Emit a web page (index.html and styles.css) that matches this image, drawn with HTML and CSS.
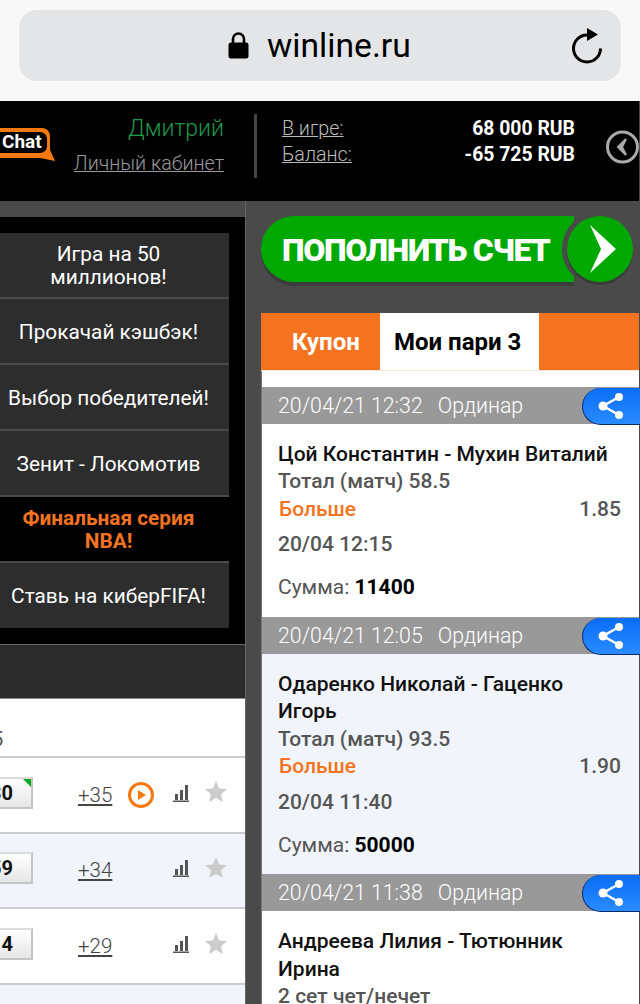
FILE: index.html

```html
<!DOCTYPE html>
<html lang="ru">
<head>
  <meta charset="UTF-8">
  <title>winline.ru</title>
  <meta name="viewport" content="width=device-width, initial-scale=1.0">
  <link rel="stylesheet" href="styles.css">
</head>
<body>
  <div class="addr-wrap">
    <div class="addr">
      <svg class="lock" width="21" height="28" viewBox="0 0 21 28"><path d="M5 13V8a5.500 5.500 0 0 1 11 0v5" fill="none" stroke="#000" stroke-width="2.600"/><rect x="0.500" y="11.500" width="20" height="16" rx="2.500" fill="#000"/></svg>
      <span class="url">winline.ru</span>
      <svg class="reload" width="32" height="36" viewBox="0 0 32 36"><path d="M16 7A13.500 13.500 0 1 0 29.500 20.500" fill="none" stroke="#000" stroke-width="3"/><path d="M16 0l11 6.500-11 6.500z" fill="#000"/></svg>
    </div>
  </div>

  <div class="page">
    <header class="top">
      <svg class="chat" width="56" height="44" viewBox="0 0 56 44">
        <path d="M0 0h42a8 8 0 0 1 8 8v14l5 11-15-3H0z" fill="#f47a10"/>
        <rect x="-6" y="4" width="53" height="21" rx="7" fill="#000"/>
        <text x="2" y="20" class="chat-txt">Chat</text>
      </svg>
      <div class="user">
        <div class="user-name">Дмитрий</div>
        <a class="user-link">Личный кабинет</a>
      </div>
      <div class="sep"></div>
      <div class="money">
        <div class="money-row"><a>В игре:</a><b>68 000 RUB</b></div>
        <div class="money-row"><a>Баланс:</a><b>-65 725 RUB</b></div>
      </div>
      <svg class="back" width="33" height="36" viewBox="0 0 33 36"><circle cx="16.500" cy="18" r="15" fill="none" stroke="#aaa" stroke-width="3"/><path d="M20 10l-8 8 8 8-4-8z" fill="#aaa" stroke="#aaa" stroke-width="2"/></svg>
    </header>

    <div class="main">
      <div class="left">
        <div class="promo">
          <div class="promo-item">Игра на 50<br>миллионов!</div>
          <div class="promo-item">Прокачай кэшбэк!</div>
          <div class="promo-item">Выбор победителей!</div>
          <div class="promo-item">Зенит - Локомотив</div>
          <div class="promo-item hot">Финальная серия<br>NBA!</div>
          <div class="promo-item">Ставь на киберFIFA!</div>
        </div>
        <div class="dark-bar"></div>
        <div class="tbl">
          <div class="tbl-head"><span>5</span></div>
          <div class="tbl-row">
            <div class="odd new">30</div>
            <a class="more">+35</a>
            <svg class="play" width="26" height="26" viewBox="0 0 26 26"><circle cx="13" cy="13" r="11.500" fill="none" stroke="#f47a10" stroke-width="3"/><path d="M10 8l8 5-8 5z" fill="#f47a10"/></svg>
            <svg class="bars" width="16" height="18" viewBox="0 0 16 18"><path d="M0 16.500h16v1.500H0zM2 10h3v6H2zM7 6h3v10H7zM12 1h3v15h-3z" fill="#555"/></svg>
            <svg class="star" width="22" height="21" viewBox="0 0 22 21"><path d="M11 0l3.200 7.400 7.800.7-5.900 5.200 1.800 7.700L11 17l-6.900 4 1.800-7.700L0 8.100l7.800-.7z" fill="#ccc"/></svg>
          </div>
          <div class="tbl-row alt">
            <div class="odd">59</div>
            <a class="more">+34</a>
            <span class="play-gap"></span>
            <svg class="bars" width="16" height="18" viewBox="0 0 16 18"><path d="M0 16.500h16v1.500H0zM2 10h3v6H2zM7 6h3v10H7zM12 1h3v15h-3z" fill="#555"/></svg>
            <svg class="star" width="22" height="21" viewBox="0 0 22 21"><path d="M11 0l3.200 7.400 7.800.7-5.900 5.200 1.800 7.700L11 17l-6.900 4 1.800-7.700L0 8.100l7.800-.7z" fill="#ccc"/></svg>
          </div>
          <div class="tbl-row">
            <div class="odd">4</div>
            <a class="more">+29</a>
            <span class="play-gap"></span>
            <svg class="bars" width="16" height="18" viewBox="0 0 16 18"><path d="M0 16.500h16v1.500H0zM2 10h3v6H2zM7 6h3v10H7zM12 1h3v15h-3z" fill="#555"/></svg>
            <svg class="star" width="22" height="21" viewBox="0 0 22 21"><path d="M11 0l3.200 7.400 7.800.7-5.900 5.200 1.800 7.700L11 17l-6.900 4 1.800-7.700L0 8.100l7.800-.7z" fill="#ccc"/></svg>
          </div>
          <div class="tbl-row alt"></div>
        </div>
      </div>

      <div class="right">
        <div class="topup">
          <div class="topup-pill">ПОПОЛНИТЬ СЧЕТ</div>
          <div class="topup-go">
            <svg width="26" height="48" viewBox="0 0 26 48"><path d="M0 0l26 24L0 48l11-24z" fill="#fff"/></svg>
          </div>
        </div>

        <div class="coupon">
          <div class="tabs">
            <div class="tab">Купон</div>
            <div class="tab active">Мои пари 3</div>
          </div>

          <div class="bet-head">
            <span class="bet-time">20/04/21 12:32</span><span>Ординар</span>
            <div class="share"><svg width="26" height="28" viewBox="0 0 26 28"><path d="M21 5L5 14l16 9" fill="none" stroke="#fff" stroke-width="2.500"/><circle cx="21" cy="5" r="4" fill="#fff"/><circle cx="5" cy="14" r="4.500" fill="#fff"/><circle cx="21" cy="23" r="4" fill="#fff"/></svg></div>
          </div>
          <div class="bet">
            <div class="bet-title">Цой Константин - Мухин Виталий</div>
            <div class="bet-type">Тотал (матч) 58.5</div>
            <div class="bet-pick"><span>Больше</span><b>1.85</b></div>
            <div class="bet-date">20/04 12:15</div>
            <div class="bet-sum">Сумма: <b>11400</b></div>
          </div>

          <div class="bet-head">
            <span class="bet-time">20/04/21 12:05</span><span>Ординар</span>
            <div class="share"><svg width="26" height="28" viewBox="0 0 26 28"><path d="M21 5L5 14l16 9" fill="none" stroke="#fff" stroke-width="2.500"/><circle cx="21" cy="5" r="4" fill="#fff"/><circle cx="5" cy="14" r="4.500" fill="#fff"/><circle cx="21" cy="23" r="4" fill="#fff"/></svg></div>
          </div>
          <div class="bet alt">
            <div class="bet-title">Одаренко Николай - Гаценко Игорь</div>
            <div class="bet-type">Тотал (матч) 93.5</div>
            <div class="bet-pick"><span>Больше</span><b>1.90</b></div>
            <div class="bet-date">20/04 11:40</div>
            <div class="bet-sum">Сумма: <b>50000</b></div>
          </div>

          <div class="bet-head">
            <span class="bet-time">20/04/21 11:38</span><span>Ординар</span>
            <div class="share"><svg width="26" height="28" viewBox="0 0 26 28"><path d="M21 5L5 14l16 9" fill="none" stroke="#fff" stroke-width="2.500"/><circle cx="21" cy="5" r="4" fill="#fff"/><circle cx="5" cy="14" r="4.500" fill="#fff"/><circle cx="21" cy="23" r="4" fill="#fff"/></svg></div>
          </div>
          <div class="bet">
            <div class="bet-title">Андреева Лилия - Тютюнник Ирина</div>
            <div class="bet-type">2 сет чет/нечет</div>
          </div>
        </div>
      </div>
    </div>
  </div>
</body>
</html>
```

FILE: styles.css

```css
html, body { margin: 0; padding: 0; height: 1004px; overflow: hidden; }
body { font-family: Roboto, "Liberation Sans", sans-serif; background: #4a4a4a; width: 640px; }
a { text-decoration: underline; }

.addr-wrap { height: 101px; background: #f8f8f8; padding: 10px 19px 0; box-sizing: border-box; }
.addr { height: 71px; background: #e4e5e7; border-radius: 18px; display: flex; align-items: center; position: relative; padding-left: 209px; }
.lock { margin-right: 18px; margin-bottom: 1px; }
.url { font-size: 33.700px; font-weight: 400; color: #000; margin-bottom: 1px; }
.reload { margin-left: auto; margin-right: 18px; }

.page { width: 640px; height: 903px; overflow: hidden; }
.top { height: 100px; width: 639px; background: #000; display: flex; align-items: flex-start; overflow: hidden; }
.chat { margin-top: 27px; flex: none; }
.chat-txt { font: bold 19px Roboto, sans-serif; fill: #fff; }
.user { width: 168px; text-align: right; padding-top: 14px; }
.user-name { color: #1d9a4c; font-size: 23px; font-weight: 300; line-height: 28px; }
.user-link { display: inline-block; color: #9a9a9a; font-size: 19.700px; font-weight: 300; line-height: 26px; margin-top: 8px; }
.sep { width: 3px; height: 64px; background: #444; margin: 13px 25px 0 30px; flex: none; }
.money { width: 293px; padding-top: 15px; flex: none; }
.money-row { display: flex; justify-content: space-between; height: 26px; line-height: 26px; font-size: 19.700px; }
.money-row a { color: #bbb; font-weight: 300; }
.money-row b { color: #fff; font-weight: 700; font-size: 19.400px; }
.back { margin: 28px 0 0 31px; flex: none; }

.main { display: flex; align-items: flex-start; }
.left { width: 245px; flex: none; padding-top: 16px; border-right: 1px solid #666; }
.promo { background: #000; padding: 16px 16px 16px 0; }
.promo-item { height: 62px; padding: 2px 12px 0 0; background: #2d2d2d; border-bottom: 2px solid #4a4a4a; display: flex; align-items: center; justify-content: center; text-align: center; color: #fff; font-size: 20.800px; line-height: 23px; }
.promo-item:last-child { border-bottom: none; height: 63px; }
.promo-item.hot { background: #000; color: #f47321; font-weight: 700; font-size: 20.800px; }
.dark-bar { height: 53px; background: #2b2b2b; border-top: 1px solid #666; border-bottom: 1px solid #888; }

.tbl { background: #fff; }
.tbl-head { height: 57px; display: flex; align-items: flex-end; margin-left: -8px; color: #555; font-size: 20px; line-height: 34px; }
.tbl-row { height: 73.670px; border-top: 2px solid #ccc; display: flex; align-items: center; background: #fff; }
.tbl-row.alt { background: #f1f5fb; }
.odd { width: 33px; height: 32px; box-sizing: border-box; flex: none; display: flex; justify-content: flex-end; align-items: center; padding-right: 18px; border: 2px solid #c4c4c4; border-left: none; border-top-color: #ddd; background: linear-gradient(#fff, #e6e6e6); font-size: 20px; font-weight: 700; color: #111; position: relative; overflow: hidden; white-space: nowrap; margin-top: -4px; }
.odd.new::after { content: ""; position: absolute; right: -2px; top: -2px; border-style: solid; border-width: 0 12px 12px 0; border-color: transparent #00a81c transparent transparent; }
.more { margin-left: 45px; width: 35px; color: #444; font-size: 20.500px; font-weight: 300; flex: none; }
.play { margin-left: 15px; flex: none; }
.play-gap { width: 26px; margin-left: 15px; flex: none; }
.bars { margin-left: 19px; flex: none; margin-top: -4px; }
.star { margin-left: 16px; flex: none; margin-top: -6px; }

.right { flex: 1; padding: 15px 0 0 15px; min-width: 0; }
.topup { display: flex; align-items: center; height: 66px; }
.topup-pill { width: 313px; height: 66px; box-sizing: border-box; background: #00a800; border-radius: 33px 0 0 33px; box-shadow: 0 4px 0 #3c3c3c; color: #fff; font-size: 32px; font-weight: 900; letter-spacing: -1.300px; line-height: 68px; padding-left: 21px; white-space: nowrap; }
.topup-go { width: 66px; height: 66px; flex: none; border-radius: 50%; background: #00a800; box-shadow: 0 3px 0 #3c3c3c, 0 0 0 5px #4a4a4a; display: flex; align-items: center; justify-content: center; margin-left: -7px; position: relative; padding-left: 6px; box-sizing: border-box; }

.coupon { margin-top: 31px; background: #fff; border-left: 1px solid #777; border-right: 1px solid #4a4a4a; }
.tabs { height: 57px; background: #f47321; display: flex; border-bottom: 1px solid #fde6da; margin-bottom: 16px; margin-left: -1px; }
.tab { width: 119px; color: #fff; font-size: 24px; font-weight: 700; line-height: 58px; padding-left: 31px; box-sizing: border-box; }
.tab.active { width: 159px; background: #fff; color: #000; padding-left: 14px; }

.bet-head { height: 37px; background: #999; color: #fff; font-size: 21.300px; font-weight: 300; line-height: 37px; padding-left: 16px; position: relative; }
.bet-time { margin-right: 15px; }
.share { position: absolute; right: -1px; top: 1px; width: 58px; height: 37px; box-sizing: border-box; border-radius: 19px 0 0 19px; background: linear-gradient(#0a6cf5, #2a8cff); border-left: 1px solid #0a2a6a; border-bottom: 1px solid #0a2a6a; display: flex; align-items: center; padding-left: 15px; }

.bet { padding: 17px 18px 15.500px 16px; color: #555; font-size: 21px; line-height: 27.250px; font-weight: 500; }
.bet.alt { background: #f1f5fb; }
.bet-title { color: #111; font-weight: 500; }
.bet-pick { display: flex; justify-content: space-between; }
.bet-pick span { color: #f47321; padding-left: 1px; }
.bet-pick b { font-weight: 500; }
.bet-date { margin-top: 8.500px; }
.bet-sum { margin-top: 15.750px; font-weight: 400; }
.bet-sum b { color: #000; font-weight: 700; }
```
